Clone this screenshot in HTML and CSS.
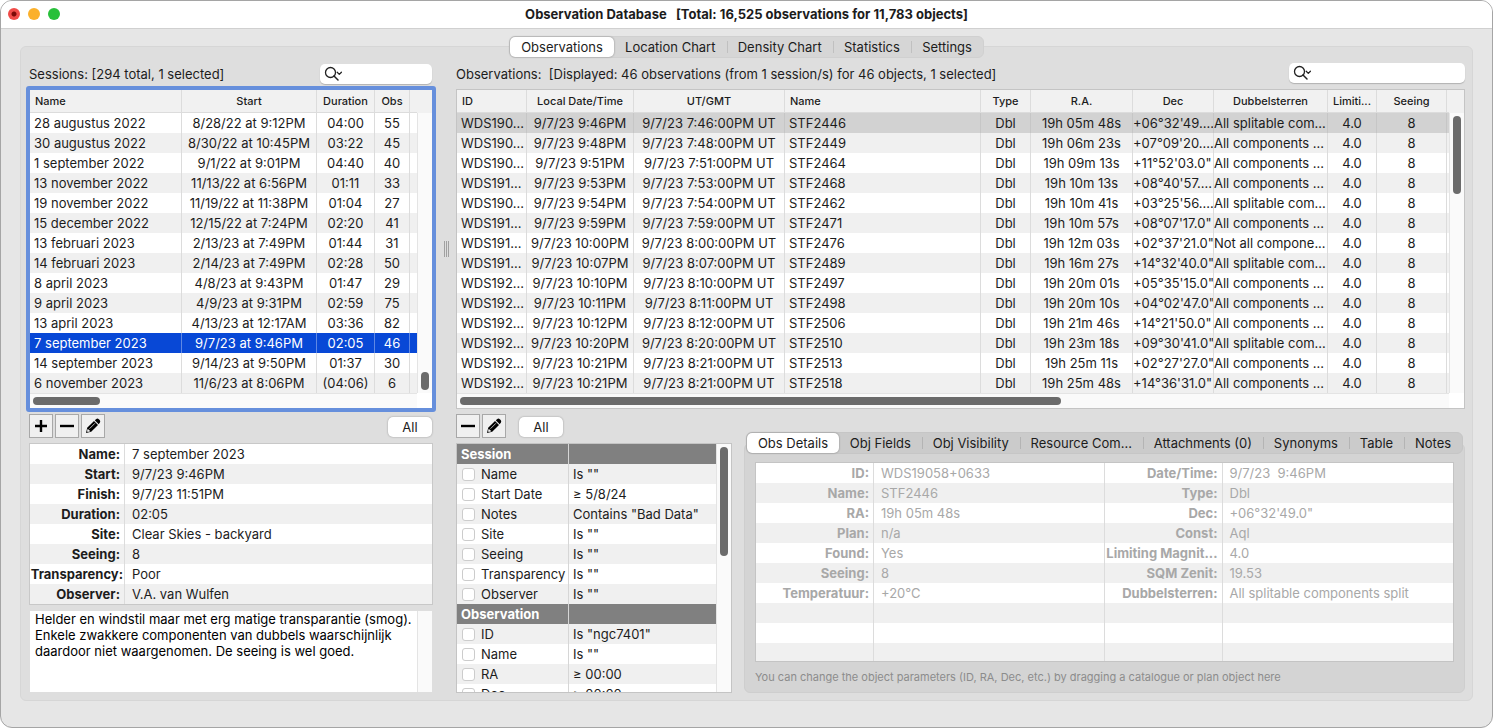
FILE: index.html
```
<!DOCTYPE html>
<html lang="en">
<head>
    <meta charset="UTF-8">
    <title>Observation Database</title>
    <link rel="stylesheet" href="styles.css">
</head>
<body>
<svg class="defs" width="0" height="0">
    <symbol id="i-search" viewBox="0 0 20 16">
        <circle cx="6.5" cy="6.5" r="5" fill="none" stroke="#222" stroke-width="1.3"/>
        <path d="M10 10l4 4" fill="none" stroke="#222" stroke-width="1.5" stroke-linecap="round"/>
        <path d="M13.200 6.300l2.100 2.100 2.100-2.100" fill="none" stroke="#222" stroke-width="1.3" stroke-linecap="round" stroke-linejoin="round"/>
    </symbol>
    <symbol id="i-plus" viewBox="0 0 22 22">
        <path d="M11 5v12M5 11h12" stroke="#000" stroke-width="2.4" fill="none"/>
    </symbol>
    <symbol id="i-minus" viewBox="0 0 22 22">
        <path d="M4 11h14" stroke="#000" stroke-width="2.4" fill="none"/>
    </symbol>
    <symbol id="i-edit" viewBox="0 0 22 22">
        <path d="M4 18l1.2-5.2L12 6l4 4-6.800 6.800z" fill="#000"/>
        <path d="M12.800 5.200l1.500-1.300q1.300-.8 2.500.3l.9.9q1 1.200.2 2.500l-1.200 1.600z" fill="#000"/>
        <path d="M7.500 13.700l5.400-5.400" stroke="#fff" stroke-width=".7"/>
        <path d="M5.700 13.700l2.700 2.600-2.600.7-.8-.8z" fill="#eee"/>
    </symbol>
</svg>
<div class="window">
    <header class="titlebar">
        <div class="lights">
            <button class="light red" aria-label="Close"></button>
            <button class="light yellow" aria-label="Minimize"></button>
            <button class="light green" aria-label="Zoom"></button>
        </div>
        <h1>Observation Database &nbsp; [Total: 16,525 observations for 11,783 objects]</h1>
    </header>

    <main class="content">
        <nav class="tabs main-tabs">
            <button class="tab active">Observations</button>
            <button class="tab">Location Chart</button>
            <button class="tab">Density Chart</button>
            <button class="tab">Statistics</button>
            <button class="tab">Settings</button>
        </nav>

        <div class="panel">
            <!-- sessions -->
            <section class="sessions">
                <div class="top">
                    <label for="find-session">Sessions: [294 total, 1 selected]</label>
                    <div class="search"><svg width="20" height="16"><use href="#i-search"/></svg><input type="text" id="find-session"></div>
                </div>
                <div class="list focus">
                    <div class="view">
                        <table class="grid">
                            <colgroup><col><col class="w135"><col class="w58"><col class="w35"><col class="w7"></colgroup>
                            <thead><tr><th class="l">Name</th><th>Start</th><th>Duration</th><th>Obs</th><th class="end"></th></tr></thead>
                            <tbody>
                            <tr><td class="l">28 augustus 2022</td><td>8/28/22 at 9:12PM</td><td>04:00</td><td>55</td><td></td></tr>
                            <tr><td class="l">30 augustus 2022</td><td>8/30/22 at 10:45PM</td><td>03:22</td><td>45</td><td></td></tr>
                            <tr><td class="l">1 september 2022</td><td>9/1/22 at 9:01PM</td><td>04:40</td><td>40</td><td></td></tr>
                            <tr><td class="l">13 november 2022</td><td>11/13/22 at 6:56PM</td><td>01:11</td><td>33</td><td></td></tr>
                            <tr><td class="l">19 november 2022</td><td>11/19/22 at 11:38PM</td><td>01:04</td><td>27</td><td></td></tr>
                            <tr><td class="l">15 december 2022</td><td>12/15/22 at 7:24PM</td><td>02:20</td><td>41</td><td></td></tr>
                            <tr><td class="l">13 februari 2023</td><td>2/13/23 at 7:49PM</td><td>01:44</td><td>31</td><td></td></tr>
                            <tr><td class="l">14 februari 2023</td><td>2/14/23 at 7:49PM</td><td>02:28</td><td>50</td><td></td></tr>
                            <tr><td class="l">8 april 2023</td><td>4/8/23 at 9:43PM</td><td>01:47</td><td>29</td><td></td></tr>
                            <tr><td class="l">9 april 2023</td><td>4/9/23 at 9:31PM</td><td>02:59</td><td>75</td><td></td></tr>
                            <tr><td class="l">13 april 2023</td><td>4/13/23 at 12:17AM</td><td>03:36</td><td>82</td><td></td></tr>
                            <tr class="selected"><td class="l">7 september 2023</td><td>9/7/23 at 9:46PM</td><td>02:05</td><td>46</td><td></td></tr>
                            <tr><td class="l">14 september 2023</td><td>9/14/23 at 9:50PM</td><td>01:37</td><td>30</td><td></td></tr>
                            <tr><td class="l">6 november 2023</td><td>11/6/23 at 8:06PM</td><td>(04:06)</td><td>6</td><td></td></tr>
                            </tbody>
                        </table>
                        <div class="vbar"><span class="thumb low"></span></div>
                    </div>
                    <div class="hbar"><span class="thumb short"></span></div>
                </div>
                <div class="tools">
                    <button class="tool" aria-label="Add session"><svg width="22" height="22"><use href="#i-plus"/></svg></button>
                    <button class="tool" aria-label="Remove session"><svg width="22" height="22"><use href="#i-minus"/></svg></button>
                    <button class="tool" aria-label="Edit session"><svg width="22" height="22"><use href="#i-edit"/></svg></button>
                    <button class="all">All</button>
                </div>
                <table class="info session-info">
                    <tr><th>Name:</th><td>7 september 2023</td></tr>
                    <tr><th>Start:</th><td>9/7/23 9:46PM</td></tr>
                    <tr><th>Finish:</th><td>9/7/23 11:51PM</td></tr>
                    <tr><th>Duration:</th><td>02:05</td></tr>
                    <tr><th>Site:</th><td>Clear Skies - backyard</td></tr>
                    <tr><th>Seeing:</th><td>8</td></tr>
                    <tr><th class="tight">Transparency:</th><td>Poor</td></tr>
                    <tr><th>Observer:</th><td>V.A. van Wulfen</td></tr>
                </table>
                <div class="notes">
                    <textarea aria-label="Session notes">Helder en windstil maar met erg matige transparantie (smog). Enkele zwakkere componenten van dubbels waarschijnlijk daardoor niet waargenomen. De seeing is wel goed.</textarea>
                    <div class="vbar"></div>
                </div>
            </section>

            <div class="splitter"><span></span></div>

            <!-- observations -->
            <section class="observations">
                <div class="top">
                    <label for="find-obs">Observations: &nbsp;[Displayed: 46 observations (from 1 session/s) for 46 objects, 1 selected]</label>
                    <div class="search wide"><svg width="20" height="16"><use href="#i-search"/></svg><input type="text" id="find-obs"></div>
                </div>
                <div class="list">
                    <div class="view">
                        <table class="grid">
                            <colgroup><col class="w70"><col class="w107"><col class="w151"><col><col class="w50"><col class="w102"><col class="w81"><col class="w114"><col class="w49"><col class="w70"><col class="w2"></colgroup>
                            <thead><tr><th class="l">ID</th><th>Local Date/Time</th><th>UT/GMT</th><th class="l">Name</th><th>Type</th><th>R.A.</th><th>Dec</th><th>Dubbelsterren</th><th>Limiti...</th><th>Seeing</th><th class="end"></th></tr></thead>
                            <tbody>
                            <tr class="current"><td class="l">WDS190...</td><td>9/7/23 9:46PM</td><td>9/7/23 7:46:00PM UT</td><td class="l">STF2446</td><td>Dbl</td><td>19h 05m 48s</td><td class="f">+06°32'49....</td><td class="f">All splitable com...</td><td>4.0</td><td>8</td><td></td></tr>
                            <tr><td class="l">WDS190...</td><td>9/7/23 9:48PM</td><td>9/7/23 7:48:00PM UT</td><td class="l">STF2449</td><td>Dbl</td><td>19h 06m 23s</td><td class="f">+07°09'20....</td><td class="f">All components ...</td><td>4.0</td><td>8</td><td></td></tr>
                            <tr><td class="l">WDS190...</td><td>9/7/23 9:51PM</td><td>9/7/23 7:51:00PM UT</td><td class="l">STF2464</td><td>Dbl</td><td>19h 09m 13s</td><td class="f">+11°52'03.0"</td><td class="f">All components ...</td><td>4.0</td><td>8</td><td></td></tr>
                            <tr><td class="l">WDS191...</td><td>9/7/23 9:53PM</td><td>9/7/23 7:53:00PM UT</td><td class="l">STF2468</td><td>Dbl</td><td>19h 10m 13s</td><td class="f">+08°40'57....</td><td class="f">All components ...</td><td>4.0</td><td>8</td><td></td></tr>
                            <tr><td class="l">WDS190...</td><td>9/7/23 9:54PM</td><td>9/7/23 7:54:00PM UT</td><td class="l">STF2462</td><td>Dbl</td><td>19h 10m 41s</td><td class="f">+03°25'56....</td><td class="f">All splitable com...</td><td>4.0</td><td>8</td><td></td></tr>
                            <tr><td class="l">WDS191...</td><td>9/7/23 9:59PM</td><td>9/7/23 7:59:00PM UT</td><td class="l">STF2471</td><td>Dbl</td><td>19h 10m 57s</td><td class="f">+08°07'17.0"</td><td class="f">All components ...</td><td>4.0</td><td>8</td><td></td></tr>
                            <tr><td class="l">WDS191...</td><td>9/7/23 10:00PM</td><td>9/7/23 8:00:00PM UT</td><td class="l">STF2476</td><td>Dbl</td><td>19h 12m 03s</td><td class="f">+02°37'21.0"</td><td class="f">Not all compone...</td><td>4.0</td><td>8</td><td></td></tr>
                            <tr><td class="l">WDS191...</td><td>9/7/23 10:07PM</td><td>9/7/23 8:07:00PM UT</td><td class="l">STF2489</td><td>Dbl</td><td>19h 16m 27s</td><td class="f">+14°32'40.0"</td><td class="f">All splitable com...</td><td>4.0</td><td>8</td><td></td></tr>
                            <tr><td class="l">WDS192...</td><td>9/7/23 10:10PM</td><td>9/7/23 8:10:00PM UT</td><td class="l">STF2497</td><td>Dbl</td><td>19h 20m 01s</td><td class="f">+05°35'15.0"</td><td class="f">All components ...</td><td>4.0</td><td>8</td><td></td></tr>
                            <tr><td class="l">WDS192...</td><td>9/7/23 10:11PM</td><td>9/7/23 8:11:00PM UT</td><td class="l">STF2498</td><td>Dbl</td><td>19h 20m 10s</td><td class="f">+04°02'47.0"</td><td class="f">All components ...</td><td>4.0</td><td>8</td><td></td></tr>
                            <tr><td class="l">WDS192...</td><td>9/7/23 10:12PM</td><td>9/7/23 8:12:00PM UT</td><td class="l">STF2506</td><td>Dbl</td><td>19h 21m 46s</td><td class="f">+14°21'50.0"</td><td class="f">All components ...</td><td>4.0</td><td>8</td><td></td></tr>
                            <tr><td class="l">WDS192...</td><td>9/7/23 10:20PM</td><td>9/7/23 8:20:00PM UT</td><td class="l">STF2510</td><td>Dbl</td><td>19h 23m 18s</td><td class="f">+09°30'41.0"</td><td class="f">All splitable com...</td><td>4.0</td><td>8</td><td></td></tr>
                            <tr><td class="l">WDS192...</td><td>9/7/23 10:21PM</td><td>9/7/23 8:21:00PM UT</td><td class="l">STF2513</td><td>Dbl</td><td>19h 25m 11s</td><td class="f">+02°27'27.0"</td><td class="f">All components ...</td><td>4.0</td><td>8</td><td></td></tr>
                            <tr><td class="l">WDS192...</td><td>9/7/23 10:21PM</td><td>9/7/23 8:21:00PM UT</td><td class="l">STF2518</td><td>Dbl</td><td>19h 25m 48s</td><td class="f">+14°36'31.0"</td><td class="f">All components ...</td><td>4.0</td><td>8</td><td></td></tr>
                            </tbody>
                        </table>
                        <div class="vbar"><span class="thumb high"></span></div>
                    </div>
                    <div class="hbar"><span class="thumb long"></span></div>
                </div>

                <div class="lower">
                    <div class="filter">
                        <div class="tools">
                            <button class="tool" aria-label="Remove observation"><svg width="22" height="22"><use href="#i-minus"/></svg></button>
                            <button class="tool" aria-label="Edit observation"><svg width="22" height="22"><use href="#i-edit"/></svg></button>
                            <button class="all">All</button>
                        </div>
                        <div class="filter-box">
                            <table>
                                <tr class="group"><th>Session</th><th></th></tr>
                                <tr><td><label><input type="checkbox">Name</label></td><td>Is ""</td></tr>
                                <tr><td><label><input type="checkbox">Start Date</label></td><td>≥ 5/8/24</td></tr>
                                <tr><td><label><input type="checkbox">Notes</label></td><td>Contains "Bad Data"</td></tr>
                                <tr><td><label><input type="checkbox">Site</label></td><td>Is ""</td></tr>
                                <tr><td><label><input type="checkbox">Seeing</label></td><td>Is ""</td></tr>
                                <tr><td><label><input type="checkbox">Transparency</label></td><td>Is ""</td></tr>
                                <tr><td><label><input type="checkbox">Observer</label></td><td>Is ""</td></tr>
                                <tr class="group"><th>Observation</th><th></th></tr>
                                <tr><td><label><input type="checkbox">ID</label></td><td>Is "ngc7401"</td></tr>
                                <tr><td><label><input type="checkbox">Name</label></td><td>Is ""</td></tr>
                                <tr><td><label><input type="checkbox">RA</label></td><td>≥ 00:00</td></tr>
                                <tr><td><label><input type="checkbox">Dec</label></td><td>≥ 00:00</td></tr>
                            </table>
                            <div class="vbar"><span class="thumb tall"></span></div>
                        </div>
                    </div>

                    <div class="details">
                        <nav class="tabs">
                            <button class="tab active">Obs Details</button>
                            <button class="tab">Obj Fields</button>
                            <button class="tab">Obj Visibility</button>
                            <button class="tab">Resource Com...</button>
                            <button class="tab">Attachments (0)</button>
                            <button class="tab">Synonyms</button>
                            <button class="tab">Table</button>
                            <button class="tab">Notes</button>
                        </nav>
                        <div class="details-body">
                            <div class="details-box">
                                <table class="info">
                                    <tr><th>ID:</th><td>WDS19058+0633</td><th>Date/Time:</th><td>9/7/23&nbsp; 9:46PM</td></tr>
                                    <tr><th>Name:</th><td>STF2446</td><th>Type:</th><td>Dbl</td></tr>
                                    <tr><th>RA:</th><td>19h 05m 48s</td><th>Dec:</th><td>+06°32'49.0"</td></tr>
                                    <tr><th>Plan:</th><td>n/a</td><th>Const:</th><td>Aql</td></tr>
                                    <tr><th>Found:</th><td>Yes</td><th>Limiting Magnit...</th><td>4.0</td></tr>
                                    <tr><th>Seeing:</th><td>8</td><th>SQM Zenit:</th><td>19.53</td></tr>
                                    <tr><th>Temperatuur:</th><td>+20°C</td><th>Dubbelsterren:</th><td>All splitable components split</td></tr>
                                    <tr><th></th><td></td><th></th><td></td></tr>
                                    <tr><th></th><td></td><th></th><td></td></tr>
                                    <tr><th></th><td></td><th></th><td></td></tr>
                                </table>
                            </div>
                            <p class="hint">You can change the object parameters (ID, RA, Dec, etc.) by dragging a catalogue or plan object here</p>
                        </div>
                    </div>
                </div>
            </section>
        </div>
    </main>
</div>
</body>
</html>
```
FILE: styles.css
```
*{margin:0;padding:0;box-sizing:border-box;}
body{background:#fff;font:13px/20px Inter,"Liberation Sans",sans-serif;color:#1c1c1c;}
button,input,textarea{font:inherit;color:inherit;border:0;outline:0;}
.defs{position:absolute;}
table{border-collapse:separate;border-spacing:0;table-layout:fixed;width:100%;}

.window{height:100vh;min-height:720px;display:flex;flex-direction:column;background:#e6e6e6;border:1px solid #a5a5a5;border-radius:12px;overflow:hidden;}
.titlebar{display:flex;align-items:center;height:28px;flex:none;background:#fff;border-bottom:1px solid #d0d0d0;padding:0 7px 2px;}
.titlebar h1{flex:1;text-align:center;font-size:13px;font-weight:700;padding-right:54px;}
.lights{display:flex;gap:8px;width:54px;}
.light{width:12px;height:12px;border-radius:50%;}
.red{background:radial-gradient(circle,#7c0a08 2px,#f04b48 3px);}
.yellow{background:#fbb02b;}
.green{background:#28c03a;}

.content{flex:1;display:flex;flex-direction:column;min-height:0;padding:7px 19px 26px;}
.tabs{display:flex;height:22px;background:#d6d6d6;border:1px solid #d0d0d0;border-radius:6px;position:relative;z-index:1;}
.tab{flex:1 1 auto;background:none;line-height:20px;position:relative;white-space:nowrap;}
.tab + .tab + .tab::before{content:"";position:absolute;left:0;top:4px;height:12px;width:1px;background:#c0c0c0;}
.tab.active{background:#fff;border-radius:5px;box-shadow:0 0 2px rgba(0,0,0,.4);}
.main-tabs{width:475px;align-self:center;margin-bottom:-12px;}

.panel{flex:1;min-height:0;display:flex;background:#dedede;border:1px solid #d6d6d6;border-radius:6px;padding:17px 7px 7px 5px;}
.sessions{width:410px;flex:none;display:flex;flex-direction:column;}
.observations{flex:1;min-width:0;display:flex;flex-direction:column;}
.splitter{width:20px;flex:none;display:flex;justify-content:center;padding-top:177px;}
.splitter span{width:5px;height:16px;border:1px solid #a0a0a0;border-width:0 1px;background:linear-gradient(90deg,transparent 1px,#a0a0a0 1px,#a0a0a0 2px,transparent 2px);}

.top{display:flex;justify-content:space-between;height:22px;}
.sessions .top{padding:0 4px 0 3px;}
.search{display:flex;align-items:center;width:112px;height:20px;background:#fff;border-radius:5px;box-shadow:0 1px 1px rgba(0,0,0,.2);padding-left:4px;}
.search svg{flex:none;}
.search input{flex:1;min-width:0;background:none;}
.observations .search{width:176px;margin-top:-1px;}

.list{background:#fff;border:1px solid #c4c4c4;margin-top:3px;}
.list.focus{border:4px solid #668fdc;border-radius:3px;margin-top:0;}
.view{display:flex;background:#f1f1f1;}
.view table{flex:1;min-width:0;}
.grid th{height:23px;font-size:11px;font-weight:500;background:#f1f1f1;border-right:1px solid #dcdcdc;border-bottom:1px solid #dcdcdc;}
.grid td{height:20px;text-align:center;white-space:nowrap;overflow:hidden;border-right:1px solid #dcdcdc;background:#fff;}
.grid th.l{text-align:left;padding-left:5px;}
.grid td.l{text-align:left;padding-left:4px;}
.grid td.f{text-align:left;}
.grid tr > :last-child{border-right:0;}
.grid tbody tr:nth-child(even) td{background:#f0f0f0;}
.grid tbody tr.selected td{background:#0848d6;color:#fff;border-right-color:#5f88e4;}
.grid tbody tr.current td{background:#d2d2d2;border-right-color:#c6c6c6;}
.w2{width:2px;}
.w7{width:7px;}
.w35{width:35px;}
.w49{width:49px;}
.w50{width:50px;}
.w58{width:58px;}
.w70{width:70px;}
.w81{width:81px;}
.w102{width:102px;}
.w107{width:107px;}
.w114{width:114px;}
.w135{width:135px;}
.w151{width:151px;}

.vbar{width:15px;flex:none;display:flex;flex-direction:column;align-items:center;background:#fafafa;border-left:1px solid #e4e4e4;padding:3px 0;}
.view .vbar{margin-top:23px;}
.hbar{height:15px;display:flex;align-items:center;background:#fafafa;border-top:1px solid #e4e4e4;padding:0 3px;margin-right:15px;}
.thumb{background:#6b6b6b;border-radius:4px;width:8px;height:8px;}
.thumb.low{height:18px;margin-top:auto;}
.thumb.high{height:78px;}
.thumb.tall{height:109px;}
.thumb.short{width:67px;}
.thumb.long{width:61%;}

.tools{display:flex;gap:2px;height:31px;padding:2px 4px 0 3px;}
.tool{width:24px;height:24px;border:1px solid #a8a8a8;background:#f0f0f0;}
.tool svg{display:block;}
.all{width:44px;height:20px;margin:3px 0 0 auto;border-radius:5px;background:#fff;box-shadow:0 0 2px rgba(0,0,0,.35);}

.info th,.info td{height:20px;white-space:nowrap;overflow:hidden;}
.info th{width:95px;text-align:right;font-weight:700;padding-right:4px;border-right:1px solid #dcdcdc;}
.info td{padding-left:7px;}
.info tr{background:#fff;}
.info tr:nth-child(even){background:#f0f0f0;}
.info th.tight{padding-right:1px;}
.session-info{width:auto;margin:0 3px;border:1px solid #c8c8c8;}
.notes{flex:1;min-height:0;display:flex;background:#fff;margin:6px 4px 1px;}
.notes textarea{flex:1;resize:none;overflow:hidden;line-height:16px;padding:0 5px;background:none;color:#000;}

.lower{flex:1;min-height:0;display:flex;gap:12px;padding-top:3px;}
.filter{width:276px;flex:none;display:flex;flex-direction:column;}
.filter .tools{padding-left:0;}
.filter .all{margin-left:11px;}
.filter-box{flex:1;min-height:0;display:flex;align-items:stretch;overflow:hidden;border:1px solid #c4c4c4;background:#fff;}
.filter-box table{flex:1;align-self:flex-start;}
.filter-box tr{background:#fff;}
.filter-box tr:nth-child(even){background:#f0f0f0;}
.filter-box td,.filter-box th{height:20px;padding-left:4px;text-align:left;white-space:nowrap;}
.filter-box tr > :first-child{width:112px;border-right:1px solid #d6d6d6;}
.filter-box tr.group{background:#808080;color:#fff;}
.filter-box label{display:flex;align-items:center;}
.filter-box input{appearance:none;width:13px;height:13px;margin:0 6px 0 1px;border:1px solid #ccc;border-radius:3px;background:#fff;}

.details{flex:1;min-width:0;display:flex;flex-direction:column;padding-top:20px;}
.details .tabs{margin:0 2px -11px;background:#cbcbcb;border-color:#c6c6c6;flex:none;}
.details .tab + .tab + .tab::before{background:#b4b4b4;}
.details-body{flex:1;min-height:0;display:flex;flex-direction:column;background:#d4d4d4;border:1px solid #cecece;border-radius:6px;padding:18px 10px 7px;}
.details-box{flex:1;min-height:0;overflow:hidden;border:1px solid #c4c4c4;background:#fff;color:#a8a8a8;}
.details-box th{width:118px;}
.details-box th:first-child + td{border-right:1px solid #dcdcdc;}
.hint{font-size:11px;color:#8c8c8c;line-height:16px;padding-top:7px;}
```
